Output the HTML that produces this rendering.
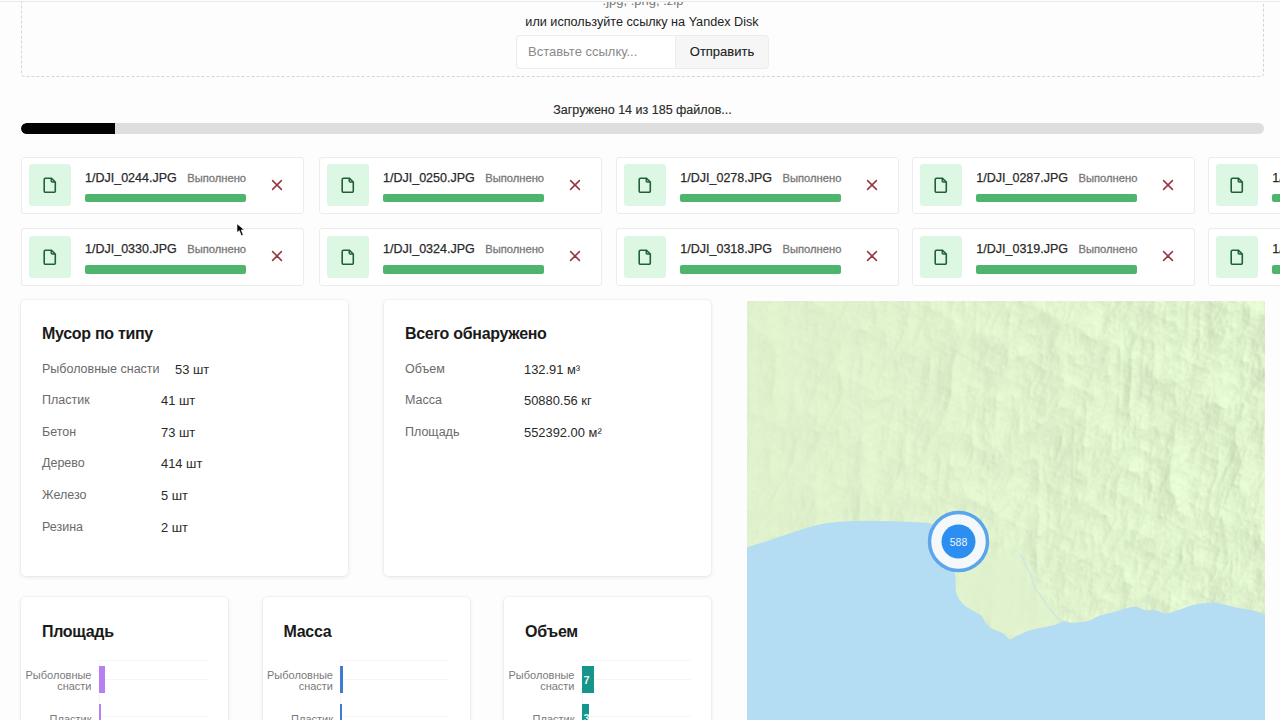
<!DOCTYPE html>
<html><head><meta charset="utf-8">
<style>
*{margin:0;padding:0;box-sizing:border-box}
html,body{width:1280px;height:720px;overflow:hidden;background:#fdfdfd;font-family:"Liberation Sans",sans-serif;color:#222}
.abs{position:absolute}
.topline{position:absolute;left:0;top:0;width:1280px;height:2px;background:#fdfdfd;border-bottom:1px solid #e9e9e9;z-index:5}
.drop{position:absolute;left:21px;top:-60px;width:1243px;height:137.3px;border:1px dashed #d5d5d5;border-radius:4px}
.t1{position:absolute;left:0;width:1286px;text-align:center;font-size:13px;color:#777}
.t2{position:absolute;left:0;width:1284px;text-align:center;font-size:12.65px;color:#222}
.inp{position:absolute;left:516px;top:34.5px;width:159px;height:34.3px;border:1px solid #ececec;border-right:none;border-radius:4px 0 0 4px;background:#fff;font-size:13px;color:#8a8a8a;padding:8px 0 0 11px}
.btn{position:absolute;left:675px;top:34.5px;width:94px;height:34.3px;border:1px solid #ececec;border-radius:0 4px 4px 0;background:#f6f6f6;font-size:13px;color:#222;text-align:center;padding-top:8.5px;-webkit-text-stroke:0.12px #222}
.prog{position:absolute;left:21px;top:122.8px;width:1243.3px;height:11px;border-radius:5.5px;background:#dedede;overflow:hidden}
.prog i{position:absolute;left:0;top:0;width:93.8px;height:11px;background:#030303;border-radius:5.5px 0 0 5.5px}
.ptxt{position:absolute;left:0;top:102.5px;width:1285px;text-align:center;font-size:12.5px;color:#2a2a2a;-webkit-text-stroke:0.15px #2a2a2a}
.fc{position:absolute;width:283.2px;height:57.5px;border:1px solid #ececec;border-radius:3px;background:#fff}
.ib{position:absolute;left:7px;top:6.8px;width:42px;height:42px;border-radius:3px;background:#dcf7e3;display:flex;align-items:center;justify-content:center}
.tb{position:relative;margin-left:63px;margin-top:13px;display:flex;flex-direction:column;align-items:stretch}
.tr{display:flex;align-items:baseline;white-space:nowrap;height:15px}
.fc{display:flex}
.fn{font-size:12.5px;color:#2a2a2a;-webkit-text-stroke:0.25px #2a2a2a}
.st{font-size:11.2px;color:#787878;-webkit-text-stroke:0.3px #787878;margin-left:10.5px}
.pb{margin-top:8px;height:8.7px;border-radius:2px;background:#4fb56c}
.x{position:relative;margin-left:25.1px;margin-top:21.3px}
.spacer{width:0}
.card{position:absolute;background:#fff;border-radius:5px;box-shadow:0 0 0 1px rgba(0,0,0,0.025),0 1px 5px rgba(0,0,0,0.09)}
.ttl{position:absolute;left:21px;top:24.6px;font-size:16px;letter-spacing:-0.3px;font-weight:bold;color:#1a1a1a}
.lb{position:absolute;font-size:12.5px;color:#6a6a6a}
.vl{position:absolute;font-size:12.9px;color:#2a2a2a}
.map{position:absolute;left:747px;top:300.5px;width:517.5px;height:420px;overflow:hidden;background:#e3f1cf}
.ct{position:absolute;left:0;width:70.5px;font-size:11px;color:#7a7a7a;text-align:right;line-height:11.2px}
.gl{position:absolute;left:77.5px;width:109px;height:1px;background:#f6f6f6}
.ax{position:absolute;left:77.5px;top:63px;width:1px;height:80px;background:#f5f5f5}
.bar{position:absolute;left:77.5px;color:#e8f4f0;font-size:11px;font-weight:bold;padding:8px 0 0 2px;overflow:hidden}
</style></head><body>
<div class="topline"></div>
<div class="drop"></div>
<div class="t1" style="top:-7px">.jpg, .png, .zip</div>
<div class="t2" style="top:15px">или используйте ссылку на Yandex Disk</div>
<div class="inp">Вставьте ссылку...</div>
<div class="btn">Отправить</div>
<div class="ptxt">Загружено 14 из 185 файлов...</div>
<div class="prog"><i></i></div>
<div class="fc" style="left:21px;top:156.5px">
<div class="ib"><svg width="14" height="16" viewBox="0 0 14 16"><path d="M2.5 1.2h6l3.8 3.8v9a1.3 1.3 0 0 1-1.3 1.3H2.5a1.3 1.3 0 0 1-1.3-1.3V2.5a1.3 1.3 0 0 1 1.3-1.3z" fill="none" stroke="#22603d" stroke-width="1.6" stroke-linejoin="round"/><path d="M8.3 1.4v2.6a1 1 0 0 0 1 1h2.8" fill="none" stroke="#22603d" stroke-width="1.6"/></svg></div>
<div class="tb"><div class="tr"><span class="fn">1/DJI_0244.JPG</span><span class="st">Выполнено</span></div><div class="pb"></div></div>
<svg class="x" width="12" height="12" viewBox="0 0 12 12"><path d="M1.6 1.6L10.4 10.4M10.4 1.6L1.6 10.4" stroke="#983641" stroke-width="1.55" stroke-linecap="round"/></svg>
</div>
<div class="fc" style="left:319px;top:156.5px">
<div class="ib"><svg width="14" height="16" viewBox="0 0 14 16"><path d="M2.5 1.2h6l3.8 3.8v9a1.3 1.3 0 0 1-1.3 1.3H2.5a1.3 1.3 0 0 1-1.3-1.3V2.5a1.3 1.3 0 0 1 1.3-1.3z" fill="none" stroke="#22603d" stroke-width="1.6" stroke-linejoin="round"/><path d="M8.3 1.4v2.6a1 1 0 0 0 1 1h2.8" fill="none" stroke="#22603d" stroke-width="1.6"/></svg></div>
<div class="tb"><div class="tr"><span class="fn">1/DJI_0250.JPG</span><span class="st">Выполнено</span></div><div class="pb"></div></div>
<svg class="x" width="12" height="12" viewBox="0 0 12 12"><path d="M1.6 1.6L10.4 10.4M10.4 1.6L1.6 10.4" stroke="#983641" stroke-width="1.55" stroke-linecap="round"/></svg>
</div>
<div class="fc" style="left:616.3px;top:156.5px">
<div class="ib"><svg width="14" height="16" viewBox="0 0 14 16"><path d="M2.5 1.2h6l3.8 3.8v9a1.3 1.3 0 0 1-1.3 1.3H2.5a1.3 1.3 0 0 1-1.3-1.3V2.5a1.3 1.3 0 0 1 1.3-1.3z" fill="none" stroke="#22603d" stroke-width="1.6" stroke-linejoin="round"/><path d="M8.3 1.4v2.6a1 1 0 0 0 1 1h2.8" fill="none" stroke="#22603d" stroke-width="1.6"/></svg></div>
<div class="tb"><div class="tr"><span class="fn">1/DJI_0278.JPG</span><span class="st">Выполнено</span></div><div class="pb"></div></div>
<svg class="x" width="12" height="12" viewBox="0 0 12 12"><path d="M1.6 1.6L10.4 10.4M10.4 1.6L1.6 10.4" stroke="#983641" stroke-width="1.55" stroke-linecap="round"/></svg>
</div>
<div class="fc" style="left:912.3px;top:156.5px">
<div class="ib"><svg width="14" height="16" viewBox="0 0 14 16"><path d="M2.5 1.2h6l3.8 3.8v9a1.3 1.3 0 0 1-1.3 1.3H2.5a1.3 1.3 0 0 1-1.3-1.3V2.5a1.3 1.3 0 0 1 1.3-1.3z" fill="none" stroke="#22603d" stroke-width="1.6" stroke-linejoin="round"/><path d="M8.3 1.4v2.6a1 1 0 0 0 1 1h2.8" fill="none" stroke="#22603d" stroke-width="1.6"/></svg></div>
<div class="tb"><div class="tr"><span class="fn">1/DJI_0287.JPG</span><span class="st">Выполнено</span></div><div class="pb"></div></div>
<svg class="x" width="12" height="12" viewBox="0 0 12 12"><path d="M1.6 1.6L10.4 10.4M10.4 1.6L1.6 10.4" stroke="#983641" stroke-width="1.55" stroke-linecap="round"/></svg>
</div>
<div class="fc" style="left:1208.3px;top:156.5px">
<div class="ib"><svg width="14" height="16" viewBox="0 0 14 16"><path d="M2.5 1.2h6l3.8 3.8v9a1.3 1.3 0 0 1-1.3 1.3H2.5a1.3 1.3 0 0 1-1.3-1.3V2.5a1.3 1.3 0 0 1 1.3-1.3z" fill="none" stroke="#22603d" stroke-width="1.6" stroke-linejoin="round"/><path d="M8.3 1.4v2.6a1 1 0 0 0 1 1h2.8" fill="none" stroke="#22603d" stroke-width="1.6"/></svg></div>
<div class="tb"><div class="tr"><span class="fn">1/DJI_0291.JPG</span><span class="st">Выполнено</span></div><div class="pb"></div></div>
<svg class="x" width="12" height="12" viewBox="0 0 12 12"><path d="M1.6 1.6L10.4 10.4M10.4 1.6L1.6 10.4" stroke="#983641" stroke-width="1.55" stroke-linecap="round"/></svg>
</div>
<div class="fc" style="left:21px;top:228px">
<div class="ib"><svg width="14" height="16" viewBox="0 0 14 16"><path d="M2.5 1.2h6l3.8 3.8v9a1.3 1.3 0 0 1-1.3 1.3H2.5a1.3 1.3 0 0 1-1.3-1.3V2.5a1.3 1.3 0 0 1 1.3-1.3z" fill="none" stroke="#22603d" stroke-width="1.6" stroke-linejoin="round"/><path d="M8.3 1.4v2.6a1 1 0 0 0 1 1h2.8" fill="none" stroke="#22603d" stroke-width="1.6"/></svg></div>
<div class="tb"><div class="tr"><span class="fn">1/DJI_0330.JPG</span><span class="st">Выполнено</span></div><div class="pb"></div></div>
<svg class="x" width="12" height="12" viewBox="0 0 12 12"><path d="M1.6 1.6L10.4 10.4M10.4 1.6L1.6 10.4" stroke="#983641" stroke-width="1.55" stroke-linecap="round"/></svg>
</div>
<div class="fc" style="left:319px;top:228px">
<div class="ib"><svg width="14" height="16" viewBox="0 0 14 16"><path d="M2.5 1.2h6l3.8 3.8v9a1.3 1.3 0 0 1-1.3 1.3H2.5a1.3 1.3 0 0 1-1.3-1.3V2.5a1.3 1.3 0 0 1 1.3-1.3z" fill="none" stroke="#22603d" stroke-width="1.6" stroke-linejoin="round"/><path d="M8.3 1.4v2.6a1 1 0 0 0 1 1h2.8" fill="none" stroke="#22603d" stroke-width="1.6"/></svg></div>
<div class="tb"><div class="tr"><span class="fn">1/DJI_0324.JPG</span><span class="st">Выполнено</span></div><div class="pb"></div></div>
<svg class="x" width="12" height="12" viewBox="0 0 12 12"><path d="M1.6 1.6L10.4 10.4M10.4 1.6L1.6 10.4" stroke="#983641" stroke-width="1.55" stroke-linecap="round"/></svg>
</div>
<div class="fc" style="left:616.3px;top:228px">
<div class="ib"><svg width="14" height="16" viewBox="0 0 14 16"><path d="M2.5 1.2h6l3.8 3.8v9a1.3 1.3 0 0 1-1.3 1.3H2.5a1.3 1.3 0 0 1-1.3-1.3V2.5a1.3 1.3 0 0 1 1.3-1.3z" fill="none" stroke="#22603d" stroke-width="1.6" stroke-linejoin="round"/><path d="M8.3 1.4v2.6a1 1 0 0 0 1 1h2.8" fill="none" stroke="#22603d" stroke-width="1.6"/></svg></div>
<div class="tb"><div class="tr"><span class="fn">1/DJI_0318.JPG</span><span class="st">Выполнено</span></div><div class="pb"></div></div>
<svg class="x" width="12" height="12" viewBox="0 0 12 12"><path d="M1.6 1.6L10.4 10.4M10.4 1.6L1.6 10.4" stroke="#983641" stroke-width="1.55" stroke-linecap="round"/></svg>
</div>
<div class="fc" style="left:912.3px;top:228px">
<div class="ib"><svg width="14" height="16" viewBox="0 0 14 16"><path d="M2.5 1.2h6l3.8 3.8v9a1.3 1.3 0 0 1-1.3 1.3H2.5a1.3 1.3 0 0 1-1.3-1.3V2.5a1.3 1.3 0 0 1 1.3-1.3z" fill="none" stroke="#22603d" stroke-width="1.6" stroke-linejoin="round"/><path d="M8.3 1.4v2.6a1 1 0 0 0 1 1h2.8" fill="none" stroke="#22603d" stroke-width="1.6"/></svg></div>
<div class="tb"><div class="tr"><span class="fn">1/DJI_0319.JPG</span><span class="st">Выполнено</span></div><div class="pb"></div></div>
<svg class="x" width="12" height="12" viewBox="0 0 12 12"><path d="M1.6 1.6L10.4 10.4M10.4 1.6L1.6 10.4" stroke="#983641" stroke-width="1.55" stroke-linecap="round"/></svg>
</div>
<div class="fc" style="left:1208.3px;top:228px">
<div class="ib"><svg width="14" height="16" viewBox="0 0 14 16"><path d="M2.5 1.2h6l3.8 3.8v9a1.3 1.3 0 0 1-1.3 1.3H2.5a1.3 1.3 0 0 1-1.3-1.3V2.5a1.3 1.3 0 0 1 1.3-1.3z" fill="none" stroke="#22603d" stroke-width="1.6" stroke-linejoin="round"/><path d="M8.3 1.4v2.6a1 1 0 0 0 1 1h2.8" fill="none" stroke="#22603d" stroke-width="1.6"/></svg></div>
<div class="tb"><div class="tr"><span class="fn">1/DJI_0332.JPG</span><span class="st">Выполнено</span></div><div class="pb"></div></div>
<svg class="x" width="12" height="12" viewBox="0 0 12 12"><path d="M1.6 1.6L10.4 10.4M10.4 1.6L1.6 10.4" stroke="#983641" stroke-width="1.55" stroke-linecap="round"/></svg>
</div>
<div class="card" style="left:21px;top:300px;width:327px;height:276px">
<div class="ttl">Мусор по типу</div>
<div class="lb" style="left:21px;top:61.6px">Рыболовные снасти</div><div class="vl" style="left:154px;top:61.6px">53 шт</div>
<div class="lb" style="left:21px;top:93.2px">Пластик</div><div class="vl" style="left:140px;top:93.2px">41 шт</div>
<div class="lb" style="left:21px;top:124.8px">Бетон</div><div class="vl" style="left:140px;top:124.8px">73 шт</div>
<div class="lb" style="left:21px;top:156.4px">Дерево</div><div class="vl" style="left:140px;top:156.4px">414 шт</div>
<div class="lb" style="left:21px;top:188.0px">Железо</div><div class="vl" style="left:140px;top:188.0px">5 шт</div>
<div class="lb" style="left:21px;top:219.6px">Резина</div><div class="vl" style="left:140px;top:219.6px">2 шт</div>
</div>
<div class="card" style="left:384px;top:300px;width:327px;height:276px">
<div class="ttl">Всего обнаружено</div>
<div class="lb" style="left:21px;top:61.6px">Объем</div><div class="vl" style="left:140px;top:61.6px">132.91 м³</div>
<div class="lb" style="left:21px;top:93.2px">Масса</div><div class="vl" style="left:140px;top:93.2px">50880.56 кг</div>
<div class="lb" style="left:21px;top:124.8px">Площадь</div><div class="vl" style="left:140px;top:124.8px">552392.00 м²</div>
</div>
<div class="card" style="left:21px;top:597.3px;width:207px;height:140px">
<div class="ttl" style="top:26.2px">Площадь</div>
<div class="gl" style="top:63px"></div>
<div class="gl" style="top:82px"></div>
<div class="gl" style="top:119px"></div>
<div class="ax"></div>
<div class="ct" style="top:72.3px">Рыболовные<br>снасти</div>
<div class="ct" style="top:116.5px">Пластик</div>
<div class="bar" style="top:68.8px;width:6px;height:27px;background:#b77ff0"></div>
<div class="bar" style="top:106.8px;width:2px;height:27px;background:#b77ff0"></div>
</div><div class="card" style="left:262.5px;top:597.3px;width:207px;height:140px">
<div class="ttl" style="top:26.2px">Масса</div>
<div class="gl" style="top:63px"></div>
<div class="gl" style="top:82px"></div>
<div class="gl" style="top:119px"></div>
<div class="ax"></div>
<div class="ct" style="top:72.3px">Рыболовные<br>снасти</div>
<div class="ct" style="top:116.5px">Пластик</div>
<div class="bar" style="top:68.8px;width:3px;height:27px;background:#3f7ad6"></div>
<div class="bar" style="top:106.8px;width:2px;height:27px;background:#3f7ad6"></div>
</div><div class="card" style="left:504px;top:597.3px;width:207px;height:140px">
<div class="ttl" style="top:26.2px">Объем</div>
<div class="gl" style="top:63px"></div>
<div class="gl" style="top:82px"></div>
<div class="gl" style="top:119px"></div>
<div class="ax"></div>
<div class="ct" style="top:72.3px">Рыболовные<br>снасти</div>
<div class="ct" style="top:116.5px">Пластик</div>
<div class="bar" style="top:68.8px;width:12px;height:27px;background:#16968a">7</div>
<div class="bar" style="top:106.8px;width:7px;height:27px;background:#16968a">3</div>
</div>
<div class="map">
<svg width="518" height="420" viewBox="747 300 518 420">
<defs>
<filter id="rl" x="0" y="0" width="100%" height="100%" color-interpolation-filters="sRGB">
<feTurbulence type="turbulence" baseFrequency="0.010 0.02" numOctaves="6" seed="5" result="n"/>
<feDiffuseLighting in="n" surfaceScale="7" lighting-color="#ffffff" result="l"><feDistantLight azimuth="200" elevation="40"/></feDiffuseLighting>
<feFlood flood-color="#dff2cc" result="g"/>
<feComposite in="g" in2="l" operator="arithmetic" k1="0.21" k2="0.865" k3="0" k4="0" result="c"/>
</filter>
<linearGradient id="fade" x1="0" y1="0" x2="1" y2="0"><stop offset="0" stop-color="#fff" stop-opacity="0.25"/><stop offset="0.45" stop-color="#fff" stop-opacity="0.6"/><stop offset="1" stop-color="#fff" stop-opacity="1"/></linearGradient>
<mask id="fm"><rect x="747" y="300" width="518" height="420" fill="url(#fade)"/></mask>
</defs>
<rect x="747" y="300" width="518" height="420" fill="#e1f2ce"/>
<g mask="url(#fm)"><rect x="600" y="150" width="800" height="700" filter="url(#rl)" transform="rotate(-62 1006 510)"/></g>
<filter id="bl" x="-20%" y="-20%" width="140%" height="140%"><feGaussianBlur stdDeviation="6"/></filter>
<path d="M950 566 C952 590 960 606 978 614 C992 624 1000 636 1010 640 C1030 632 1050 628 1060 622 C1048 600 1034 575 1020 556 C1000 545 975 548 950 566 Z" fill="#e1f2ce" opacity="0.8" filter="url(#bl)"/>
<path d="M744.0 547.0 C744.4 546.9 742.9 547.5 746.5 546.4 C750.1 545.3 758.3 542.8 765.8 540.4 C773.3 538.0 782.9 534.5 791.5 531.8 C800.1 529.1 808.7 525.9 817.3 524.0 C825.9 522.1 834.5 521.3 843.1 520.6 C851.7 519.9 860.3 519.8 868.9 519.8 C877.5 519.8 886.0 520.0 894.6 520.3 C903.2 520.6 914.7 521.2 920.4 521.5 C926.1 521.8 925.4 521.4 929.0 522.3 C932.6 523.2 938.5 524.0 942.0 527.0 C945.5 530.0 948.2 535.2 950.0 540.0 C951.8 544.8 952.2 550.5 953.0 556.0 C953.8 561.5 954.6 568.8 955.0 573.3 C955.4 577.8 955.2 579.7 955.5 583.0 C955.8 586.3 955.4 589.9 956.7 593.3 C958.0 596.7 960.5 600.5 963.3 603.3 C966.1 606.1 970.2 608.0 973.3 610.0 C976.4 612.0 979.5 612.8 981.7 615.0 C983.9 617.2 984.8 621.1 986.7 623.3 C988.6 625.5 990.5 626.8 993.3 628.3 C996.1 629.8 1000.5 630.8 1003.3 632.5 C1006.1 634.2 1007.8 637.9 1010.0 638.3 C1012.2 638.7 1013.4 636.5 1016.7 635.0 C1020.0 633.5 1025.0 630.7 1030.0 629.2 C1035.0 627.7 1042.2 626.8 1046.7 625.8 C1051.2 624.8 1053.9 624.3 1056.7 623.3 C1059.5 622.3 1060.8 620.3 1063.3 620.0 C1065.8 619.7 1067.5 621.7 1071.7 621.7 C1075.9 621.7 1083.6 621.2 1088.3 620.0 C1093.0 618.8 1095.8 616.0 1100.0 614.5 C1104.2 613.0 1108.9 612.4 1113.3 611.2 C1117.7 610.0 1122.6 608.1 1126.6 607.2 C1130.6 606.3 1134.1 605.6 1137.2 605.9 C1140.3 606.2 1142.1 608.7 1145.2 609.2 C1148.3 609.8 1152.3 608.7 1155.8 609.2 C1159.3 609.8 1162.4 612.6 1166.4 612.5 C1170.4 612.4 1175.3 609.9 1179.7 608.5 C1184.1 607.1 1188.6 605.0 1193.0 603.9 C1197.4 602.8 1201.8 602.1 1206.2 601.9 C1210.6 601.7 1214.0 601.6 1219.5 602.5 C1225.0 603.4 1233.9 606.1 1239.4 607.2 C1244.9 608.3 1248.6 608.1 1252.7 609.2 C1256.8 610.3 1261.5 612.8 1264.0 613.8 C1266.5 614.8 1267.3 614.8 1268.0 615.0 L1268 722 L744 722 Z" fill="#b4dcf2"/>
<path d="M1021 553 C1024 560 1026 566 1030 572 C1034 579 1031 584 1037 590 C1043 597 1046 604 1050 608 C1055 614 1058 618 1063 622" fill="none" stroke="#cde6e2" stroke-width="1.3"/>
<circle cx="958.5" cy="540.5" r="29" fill="#f4f8fb" stroke="#5aa5ec" stroke-width="3.5"/>
<circle cx="958.5" cy="540.5" r="17" fill="#2b8ef0"/>
<text x="958.5" y="544.5" font-family="Liberation Sans" font-size="10.5" fill="#eef5fd" text-anchor="middle">588</text>
</svg>
</div>
<svg style="position:absolute;left:0;top:0" width="1280" height="720"><path d="M237 223.8 L237 232.6 L239.3 230.5 L241.3 235.6 L243.2 234.9 L241.2 229.9 L244.3 229.9 Z" fill="#000" stroke="#fff" stroke-width="0.6"/></svg>
</body></html>
